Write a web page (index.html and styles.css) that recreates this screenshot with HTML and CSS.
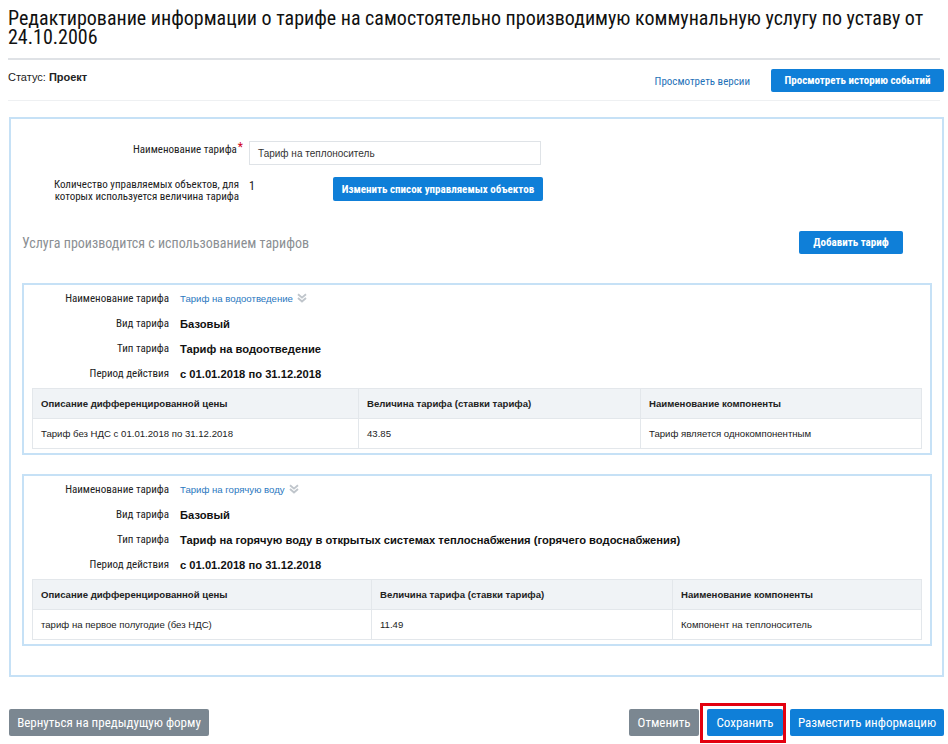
FILE: index.html
```html
<!DOCTYPE html>
<html lang="ru">
<head>
<meta charset="utf-8">
<title>Редактирование информации о тарифе</title>
<link rel="stylesheet" href="styles.css">
</head>
<body>
<div class="page">
  <h1 class="title">Редактирование информации о тарифе на самостоятельно производимую коммунальную услугу по уставу от 24.10.2006</h1>

  <div class="status-bar">
    <div class="status">Статус: <b>Проект</b></div>
    <div class="status-actions">
      <a class="link" href="#">Просмотреть версии</a>
      <button class="btn btn-blue btn-history">Просмотреть историю событий</button>
    </div>
  </div>

  <div class="panel">
    <div class="form-row form-row-name">
      <div class="form-label">Наименование тарифа<sup class="req">*</sup></div>
      <div class="input">Тариф на теплоноситель</div>
    </div>
    <div class="form-row form-row-count">
      <div class="form-label form-label-two">Количество управляемых объектов, для<br>которых используется величина тарифа</div>
      <div class="count">1</div>
      <button class="btn btn-blue btn-objects">Изменить список управляемых объектов</button>
    </div>

    <div class="section-head">
      <h2 class="section-title">Услуга производится с использованием тарифов</h2>
      <button class="btn btn-blue btn-add">Добавить тариф</button>
    </div>

    <div class="card">
      <div class="info-row info-first"><div class="info-label">Наименование тарифа</div><div class="info-link">Тариф на водоотведение <svg class="chev" width="10" height="10" viewBox="0 0 10 10"><path d="M1 1.2l4 3.4 4-3.4M1 5l4 3.4 4-3.4" fill="none" stroke="#bfc5cb" stroke-width="1.9"/></svg></div></div>
      <div class="info-row"><div class="info-label">Вид тарифа</div><div class="info-value">Базовый</div></div>
      <div class="info-row"><div class="info-label">Тип тарифа</div><div class="info-value">Тариф на водоотведение</div></div>
      <div class="info-row"><div class="info-label">Период действия</div><div class="info-value">с 01.01.2018 по 31.12.2018</div></div>
      <table class="grid grid-one">
        <colgroup><col class="c1"><col class="c2"><col class="c3"></colgroup>
        <thead><tr><th>Описание дифференцированной цены</th><th>Величина тарифа (ставки тарифа)</th><th>Наименование компоненты</th></tr></thead>
        <tbody><tr><td>Тариф без НДС с 01.01.2018 по 31.12.2018</td><td>43.85</td><td>Тариф является однокомпонентным</td></tr></tbody>
      </table>
    </div>

    <div class="card">
      <div class="info-row info-first"><div class="info-label">Наименование тарифа</div><div class="info-link">Тариф на горячую воду <svg class="chev" width="10" height="10" viewBox="0 0 10 10"><path d="M1 1.2l4 3.4 4-3.4M1 5l4 3.4 4-3.4" fill="none" stroke="#bfc5cb" stroke-width="1.9"/></svg></div></div>
      <div class="info-row"><div class="info-label">Вид тарифа</div><div class="info-value">Базовый</div></div>
      <div class="info-row"><div class="info-label">Тип тарифа</div><div class="info-value">Тариф на горячую воду в открытых системах теплоснабжения (горячего водоснабжения)</div></div>
      <div class="info-row"><div class="info-label">Период действия</div><div class="info-value">с 01.01.2018 по 31.12.2018</div></div>
      <table class="grid grid-two">
        <colgroup><col class="c1"><col class="c2"><col class="c3"></colgroup>
        <thead><tr><th>Описание дифференцированной цены</th><th>Величина тарифа (ставки тарифа)</th><th>Наименование компоненты</th></tr></thead>
        <tbody><tr><td>тариф на первое полугодие (без НДС)</td><td>11.49</td><td>Компонент на теплоноситель</td></tr></tbody>
      </table>
    </div>
  </div>

  <div class="footer">
    <button class="btn btn-gray btn-back">Вернуться на предыдущую форму</button>
    <div class="footer-right">
      <button class="btn btn-gray btn-cancel">Отменить</button>
      <div class="highlight"><button class="btn btn-blue btn-save">Сохранить</button></div>
      <button class="btn btn-blue btn-publish">Разместить информацию</button>
    </div>
  </div>
</div>
</body>
</html>
```

FILE: styles.css
```css
* { box-sizing: border-box; }
html, body { margin: 0; padding: 0; background: #fff; }
body { width: 948px; height: 744px; overflow: hidden; color: #222; }

.page {
  padding: 0 4px 0 8px;
  font-family: "Roboto Condensed", "Liberation Sans Narrow", "DejaVu Sans Condensed", Roboto, sans-serif;
}

.title {
  margin: 0 4px 0 0;
  padding-top: 9px;
  font-family: "Roboto Condensed", "Liberation Sans Narrow", Roboto, sans-serif;
  font-weight: 400;
  font-size: 20px;
  line-height: 19px;
  color: #111;
  height: 60px;
  border-bottom: 2px solid #dfe2e6;
}

.status-bar {
  display: flex;
  justify-content: space-between;
  align-items: flex-start;
  padding: 9px 0 8px 0;
  border-bottom: 1px solid #eef0f2;
  margin-right: 4px;
}
.status {
  font-family: "Liberation Sans", Arial, sans-serif;
  font-size: 11px;
  color: #222;
  padding-top: 2px;
}
.status b { font-weight: 700; }
.status-actions {
  display: flex;
  align-items: center;
  gap: 21px;
  margin-right: -4px;
}
.link {
  color: #1f72b8;
  font-size: 11px;
  text-decoration: none;
  padding-top: 2px;
}

.btn {
  font-family: "Roboto Condensed", "Liberation Sans Narrow", Roboto, sans-serif;
  border: none;
  border-radius: 2px;
  color: #fff;
  font-size: 11px;
  height: 23px;
  padding: 0;
  cursor: pointer;
  white-space: nowrap;
}
.btn-blue { background: #0f7fd8; font-weight: 700; }
.btn-gray { background: #7b8791; }
.btn-history { width: 173px; }

.panel {
  margin-top: 16px;
  margin-left: 1px;
  border: 2px solid #c6e1f6;
  padding: 22px 10px 32px 11px;
  height: 560px;
}

.form-row { display: flex; align-items: flex-start; }
.form-label {
  width: 221px;
  text-align: right;
  font-size: 11px;
  color: #222;
  line-height: 12px;
}
.form-row-name .form-label { padding-top: 3px; }
.req { color: #d0021b; font-size: 12px; vertical-align: top; position: relative; top: -3px; margin-left: 1px; }
.input {
  margin-left: 6px;
  width: 292px;
  height: 24px;
  border: 1px solid #dfe3e7;
  font-family: "Liberation Sans", Arial, sans-serif;
  font-size: 10px;
  color: #333;
  padding: 6px 8px;
  line-height: 11px;
}
.form-row-count { margin-top: 12px; }
.form-label-two { width: 217px; padding-top: 2px; line-height: 12px; }
.count {
  margin-left: 10px;
  width: 84px;
  font-size: 12px;
  padding-top: 2px;
}
.btn-objects { height: 24px; width: 210px; }

.section-head {
  display: flex;
  align-items: center;
  justify-content: space-between;
  margin-top: 28px;
  padding: 0 29px 0 0;
}
.section-title {
  margin: 0;
  font-size: 14px;
  font-weight: 400;
  color: #8b8f93;
}
.btn-add { width: 104px; }

.card {
  margin-top: 29px;
  border: 2px solid #c6e1f6;
  padding: 0 8px 4px 8px;
}
.card + .card { margin-top: 19px; }

.info-row { display: flex; align-items: center; height: 25px; }
.info-first { height: 26px; }
.info-label {
  width: 137px;
  text-align: right;
  font-size: 11px;
  color: #222;
}
.info-link {
  margin-left: 11px;
  font-family: "Liberation Sans", Arial, sans-serif;
  font-size: 9.6px;
  color: #2a78c0;
  display: flex;
  align-items: center;
  gap: 4px;
}
.chev { display: block; }
.info-value {
  margin-left: 11px;
  font-family: "Liberation Sans", Arial, sans-serif;
  font-size: 11.2px;
  font-weight: 700;
  color: #111;
}

.grid {
  margin-top: 2px;
  width: 889px;
  border-collapse: collapse;
  table-layout: fixed;
  font-family: "Liberation Sans", Arial, sans-serif;
  font-size: 9.6px;
  color: #222;
}
.grid th, .grid td {
  border: 1px solid #e3e7eb;
  height: 30px;
  padding: 0 8px;
  text-align: left;
}
.grid th { background: #f0f3f6; font-weight: 700; }
.grid-one .c1 { width: 326px; }
.grid-one .c2 { width: 282px; }
.grid-one .c3 { width: 281px; }
.grid-two .c1 { width: 339px; }
.grid-two .c2 { width: 301px; }
.grid-two .c3 { width: 249px; }

.footer {
  display: flex;
  justify-content: space-between;
  align-items: flex-start;
  margin-top: 26px;
  margin-left: 1px;
}
.footer .btn { height: 27px; font-size: 13px; font-weight: 400; }
.btn-back { margin-top: 6px; width: 200px; }
.footer-right { display: flex; align-items: flex-start; }
.btn-cancel { margin-top: 6px; width: 70px; }
.highlight {
  margin-left: 1px;
  border: 3px solid #e3000f;
  padding: 3px 0 4px 4px;
}
.btn-save { width: 76px; display: block; }
.btn-publish { margin-top: 6px; margin-left: 4px; width: 154px; }
```
